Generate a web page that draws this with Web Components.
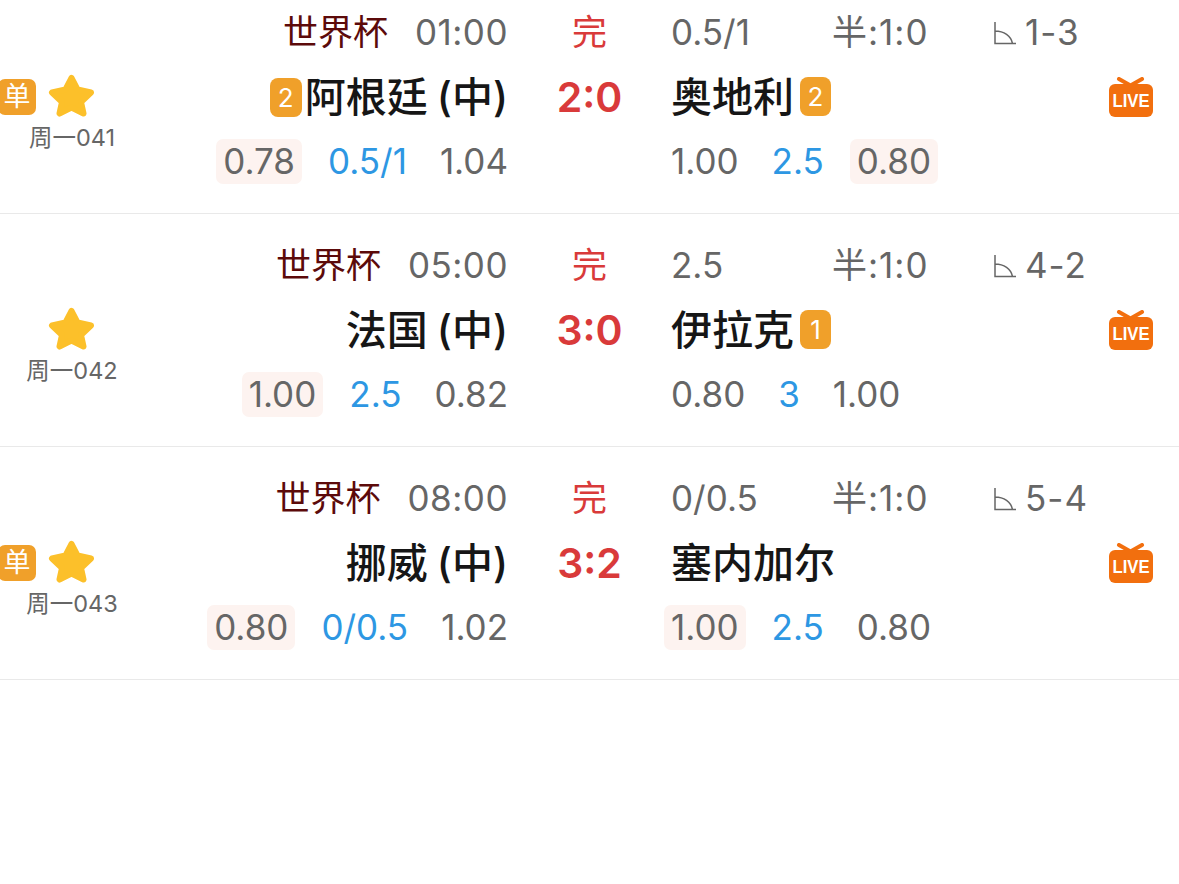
<!DOCTYPE html>
<html lang="zh">
<head>
<meta charset="utf-8">
<title>比赛</title>
<style>
html,body{margin:0;background:#fff;overflow:hidden}
body{font-family:Inter,"Noto Sans CJK SC",sans-serif;height:884px}
match-list{margin-top:-19px}
</style>
</head>
<body>
<match-list>
  <match-row league="世界杯" time="01:00" status="完" handicap="0.5/1" half="半:1:0" corner="1-3" score="2:0" day="周一041" single>
    <span slot="home">(中)</span>
    <team-name slot="home-name" side="home" badge="2">阿根廷</team-name>
    <team-name slot="away-name" badge="2">奥地利</team-name>
    <odds-group slot="home-odds"><odds-item hot>0.78</odds-item><odds-item line>0.5/1</odds-item><odds-item>1.04</odds-item></odds-group>
    <odds-group slot="away-odds"><odds-item>1.00</odds-item><odds-item line>2.5</odds-item><odds-item hot>0.80</odds-item></odds-group>
  </match-row>
  <match-row league="世界杯" time="05:00" status="完" handicap="2.5" half="半:1:0" corner="4-2" score="3:0" day="周一042">
    <span slot="home">(中)</span>
    <team-name slot="home-name" side="home">法国</team-name>
    <team-name slot="away-name" badge="1">伊拉克</team-name>
    <odds-group slot="home-odds"><odds-item hot>1.00</odds-item><odds-item line>2.5</odds-item><odds-item>0.82</odds-item></odds-group>
    <odds-group slot="away-odds"><odds-item>0.80</odds-item><odds-item line>3</odds-item><odds-item>1.00</odds-item></odds-group>
  </match-row>
  <match-row league="世界杯" time="08:00" status="完" handicap="0/0.5" half="半:1:0" corner="5-4" score="3:2" day="周一043" single>
    <span slot="home">(中)</span>
    <team-name slot="home-name" side="home">挪威</team-name>
    <team-name slot="away-name">塞内加尔</team-name>
    <odds-group slot="home-odds"><odds-item hot>0.80</odds-item><odds-item line>0/0.5</odds-item><odds-item>1.02</odds-item></odds-group>
    <odds-group slot="away-odds"><odds-item hot>1.00</odds-item><odds-item line>2.5</odds-item><odds-item>0.80</odds-item></odds-group>
  </match-row>
</match-list>
<script>
const shadow=(el,html)=>{el.attachShadow({mode:"open"}).innerHTML=html};

customElements.define("match-list",class extends HTMLElement{
  constructor(){super();shadow(this,`<style>:host{display:block}</style><slot></slot>`)}
});

customElements.define("star-icon",class extends HTMLElement{
  constructor(){super();shadow(this,`
    <style>:host{display:block;width:48px;height:44px}svg{display:block}</style>
    <svg width="48" height="44" viewBox="0 0 48 44"><path fill="#fcc02a" stroke="#fcc02a" stroke-width="6" stroke-linejoin="round" d="M23.500 4L29.500 15.500 43 18.500 33 28 35.500 39.500 23.500 33.500 11.500 39.500 14 28 4 18.500 17.500 15.500z"/></svg>`)}
});

customElements.define("live-icon",class extends HTMLElement{
  constructor(){super();shadow(this,`
    <style>:host{display:block;width:44px;height:41px}svg{display:block}</style>
    <svg width="44" height="41" viewBox="0 0 44 41">
      <path fill="none" stroke="#f26f0e" stroke-width="4" stroke-linecap="round" d="M10 2l11.500 6.500 11.500-6.500"/>
      <rect x="0" y="7" width="44" height="33" rx="6" fill="#f26f0e"/>
      <text x="22" y="30" text-anchor="middle" textLength="37" lengthAdjust="spacingAndGlyphs" font-family="Liberation Sans" font-weight="700" font-size="18" fill="#fff">LIVE</text>
    </svg>`)}
});

customElements.define("angle-icon",class extends HTMLElement{
  constructor(){super();shadow(this,`
    <style>:host{display:block;width:22px;height:24px}svg{display:block}</style>
    <svg width="22" height="24" viewBox="0 0 22 24"><path fill="none" stroke="#666" stroke-width="1.500" d="M1 1v21.500h21M1 10c9 0 16 5 17.500 12.500"/></svg>`)}
});

customElements.define("team-name",class extends HTMLElement{
  constructor(){super();shadow(this,`
    <style>
      :host{display:inline-flex;align-items:center;gap:6px;font-size:41px;font-weight:500;color:#161616;line-height:48px}
      :host([side=home]){flex-direction:row-reverse;gap:3px}
      b{display:block;width:31px;height:39px;border-radius:8px;background:#f0a02a;color:#fff;font:400 26px/39px Inter,sans-serif;text-align:center}
      :host([side=home]) b{width:32px}
    </style>
    <slot></slot>${this.hasAttribute("badge")?`<b>${this.getAttribute("badge")}</b>`:""}`)}
});

customElements.define("odds-group",class extends HTMLElement{
  constructor(){super();shadow(this,`<style>:host{display:flex;gap:33px;align-items:center}</style><slot></slot>`)}
});

customElements.define("odds-item",class extends HTMLElement{
  constructor(){super();shadow(this,`
    <style>
      :host{display:block;font-size:35px;line-height:45px;color:#666}
      :host([line]){color:#2d97e3}
      :host([hot]){background:#fdf3f0;border-radius:7px;padding:0 7px;margin:0 -7px}
    </style><slot></slot>`)}
});

customElements.define("match-row",class extends HTMLElement{
  constructor(){
    super();
    const a=n=>this.getAttribute(n)||"";
    shadow(this,`
    <style>
      :host{display:grid;box-sizing:border-box;height:233px;padding-top:19px;border-bottom:1px solid #e9e9e9;
        grid-template-columns:144px 364px 163px 1fr 88px;grid-template-rows:65px 64px 65px;align-items:center;
        font-size:35px;line-height:45px;color:#666}
      .rank{grid-column:1;grid-row:2/4;align-self:start;position:relative;display:flex;flex-direction:column;align-items:center;padding-top:9px}
      .single{position:absolute;right:108px;top:14px;width:38px;height:36px;border-radius:7px;background:#f0a02a;color:#fff;font-size:27px;line-height:36px;text-align:center}
      .day{font-size:23.500px;line-height:30px;margin-top:5px}
      .head{display:flex;justify-content:flex-end;gap:27px}
      .time{letter-spacing:.5px}
      .league{color:#5c0a0a}
      .mid{text-align:center}
      .status{color:#d93a3a}
      .score{color:#d93a3a;font-size:41px;font-weight:600}
      .info{display:grid;grid-template-columns:161px 162px auto;justify-content:start}
      .half{letter-spacing:1px}
      .corner{display:flex;align-items:center;gap:9px;letter-spacing:1px}
      .home{display:flex;justify-content:flex-end;align-items:center;gap:9px;font-size:41px;font-weight:500;color:#161616}
      .end{display:flex;justify-content:flex-end}
      .live{grid-column:5;grid-row:2;padding-left:18px}
    </style>
    <div class="rank">${this.hasAttribute("single")?`<div class="single">单</div>`:""}<star-icon></star-icon><div class="day">${a("day")}</div></div>
    <div class="head" style="grid-column:2;grid-row:1"><span class="league">${a("league")}</span><span class="time">${a("time")}</span></div>
    <div class="mid status" style="grid-column:3;grid-row:1">${a("status")}</div>
    <div class="info" style="grid-column:4;grid-row:1"><span>${a("handicap")}</span><span class="half">${a("half")}</span><span class="corner"><angle-icon></angle-icon>${a("corner")}</span></div>
    <div class="home" style="grid-column:2;grid-row:2"><slot name="home-name"></slot><slot name="home"></slot></div>
    <div class="mid score" style="grid-column:3;grid-row:2">${a("score")}</div>
    <div style="grid-column:4;grid-row:2"><slot name="away-name"></slot></div>
    <div class="end" style="grid-column:2;grid-row:3"><slot name="home-odds"></slot></div>
    <div style="grid-column:4;grid-row:3"><slot name="away-odds"></slot></div>
    <div class="live"><live-icon></live-icon></div>`);
  }
});
</script>
</body>
</html>
